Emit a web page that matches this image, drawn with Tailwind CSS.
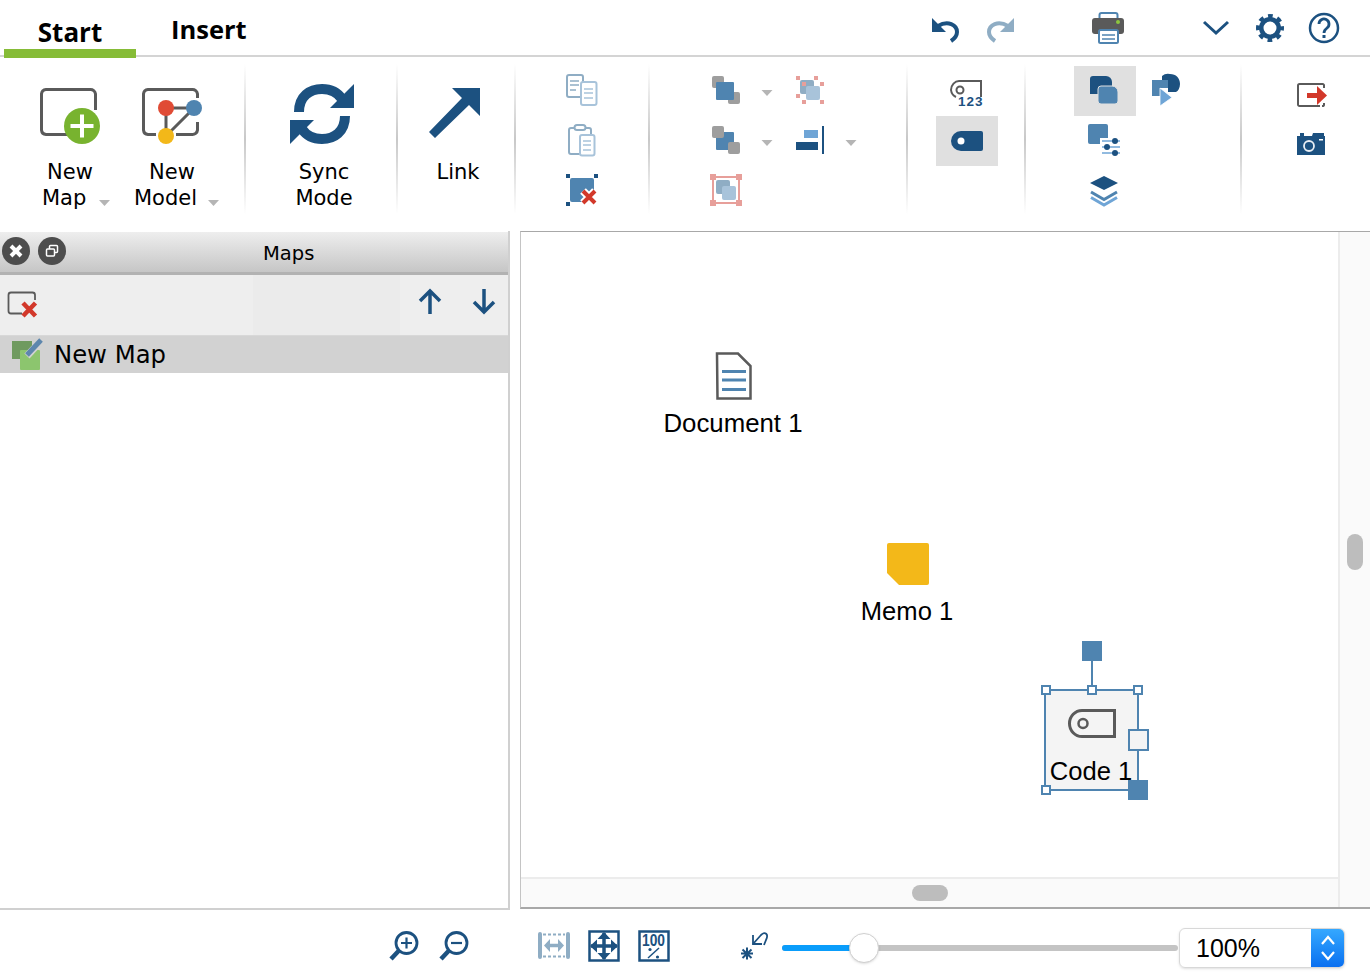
<!DOCTYPE html>
<html lang="en">
<head>
    <meta charset="UTF-8">
    <title>Maps</title>
    <script src="https://cdn.jsdelivr.net/npm/@tailwindcss/browser@4"></script>
</head>
<body class="bg-white w-[1370px] h-[977px] overflow-hidden font-['DejaVu_Sans',sans-serif] text-black">

    <!-- Tabs and quick access -->
    <header class="h-[57px] border-b-2 border-[#d4d4d4] flex items-start">
        <div class="ml-[4px] w-[132px] h-[58px] shrink-0 border-b-[9px] border-[#86bc37] pt-[14px] text-center font-['Open_Sans',sans-serif] font-bold text-[26px] leading-[36px]">Start</div>
        <div class="ml-[35px] w-[75px] shrink-0 whitespace-nowrap pt-[11px] font-['Open_Sans',sans-serif] font-bold text-[25.5px] leading-[36px]">Insert</div>
        <svg class="block ml-[685px] mt-[12px] shrink-0" width="30" height="32" viewBox="931 12 30 32">
            <path d="M932 18V32H946Z" fill="#1c5180"/>
            <path d="M938 26C948 20 957 25 957 32C957 36 954 39 951 41" fill="none" stroke="#1c5180" stroke-width="4"/>
        </svg>
        <svg class="block ml-[25px] mt-[12px] shrink-0" width="30" height="32" viewBox="986 12 30 32">
            <path d="M1014 18V32H1000Z" fill="#8fadc4"/>
            <path d="M1008 26C998 20 989 25 989 32C989 36 992 39 995 41" fill="none" stroke="#8fadc4" stroke-width="4"/>
        </svg>
        <svg class="block ml-[75px] mt-[11px] shrink-0" width="34" height="34" viewBox="1091 11 34 34">
            <rect x="1099.500" y="13" width="18" height="10" rx="2" fill="#fff" stroke="#4f84b0" stroke-width="2"/>
            <rect x="1092" y="18" width="32" height="16" rx="3" fill="#5a5a5a"/>
            <circle cx="1118" cy="22" r="2" fill="#8cc63f"/>
            <rect x="1099" y="30" width="19" height="13" rx="1.500" fill="#fff" stroke="#4f84b0" stroke-width="2"/>
            <path d="M1102 35H1115M1102 39H1115" stroke="#4f84b0" stroke-width="1.500"/>
        </svg>
        <svg class="block ml-[77px] mt-[18px] shrink-0" width="28" height="18" viewBox="1202 18 28 18">
            <path d="M1204 22L1216 33L1228 22" fill="none" stroke="#1c5180" stroke-width="3"/>
        </svg>
        <svg class="block ml-[25px] mt-[13px] shrink-0" width="30" height="30" viewBox="1255 13 30 30">
            <circle cx="1270" cy="28" r="8.750" fill="none" stroke="#1c5180" stroke-width="4.500"/>
            <circle cx="1270" cy="28" r="11.500" fill="none" stroke="#1c5180" stroke-width="5" stroke-dasharray="4.500 4.530" stroke-dashoffset="2.250"/>
        </svg>
        <svg class="block ml-[23px] mt-[12px] shrink-0" width="32" height="32" viewBox="1308 12 32 32">
            <circle cx="1324" cy="28" r="14" fill="none" stroke="#1c5180" stroke-width="2.500"/>
            <path d="M1319 24A5 5 0 1 1 1327 28C1325 29.500 1324 30.500 1324 33" fill="none" stroke="#1c5180" stroke-width="2.800"/>
            <rect x="1322.500" y="35" width="3" height="3" fill="#1c5180"/>
        </svg>
    </header>

    <!-- Ribbon -->
    <section class="h-[174px] flex text-[21px] leading-[26px]">
        <!-- New Map / New Model -->
        <div class="w-[244px] flex pl-[19px] shrink-0">
            <div class="w-[102px] pt-[23px]">
                <svg class="block mx-auto" width="66" height="68" viewBox="37 80 66 68">
                    <path d="M72 134.500H46A5 5 0 0 1 41.500 130V94A5 5 0 0 1 46 89.500H90A5 5 0 0 1 95.500 94V110" fill="none" stroke="#5a5a5a" stroke-width="3"/>
                    <circle cx="82" cy="126" r="18" fill="#78b32f"/>
                    <path d="M70.500 126H93.500M82 114.500V137.500" stroke="#fff" stroke-width="4"/>
                </svg>
                <div class="text-center mt-[11px]">New</div>
                <div class="flex items-center pl-[23px]">Map<svg class="block ml-[13px] mt-[10px]" width="11" height="6" viewBox="0 0 11 6"><path d="M0 0H11L5.500 6Z" fill="#b5b5b5"/></svg></div>
            </div>
            <div class="w-[102px] pt-[23px]">
                <svg class="block mx-auto" width="66" height="68" viewBox="139 80 66 68">
                    <path d="M156 134.500H148A5 5 0 0 1 143.500 130V94A5 5 0 0 1 148 89.500H192A5 5 0 0 1 197.500 94V98M197.500 122V130A5 5 0 0 1 192 134.500H176" fill="none" stroke="#5a5a5a" stroke-width="3"/>
                    <path d="M166 108H194L166 136Z" fill="none" stroke="#5a5a5a" stroke-width="3"/>
                    <circle cx="166" cy="108" r="8" fill="#e04b35"/>
                    <circle cx="194" cy="108" r="8" fill="#4f84b0"/>
                    <circle cx="166" cy="136" r="8" fill="#f3b819"/>
                </svg>
                <div class="text-center mt-[11px]">New</div>
                <div class="flex items-center pl-[13px]">Model<svg class="block ml-[11px] mt-[10px]" width="11" height="6" viewBox="0 0 11 6"><path d="M0 0H11L5.500 6Z" fill="#b5b5b5"/></svg></div>
            </div>
        </div>
        <div class="w-[2px] h-[150px] mt-[7px] shrink-0 bg-linear-to-b from-white via-[#c8c8c8] to-white"></div>

        <!-- Sync -->
        <div class="w-[150px] pt-[23px] shrink-0 text-center">
            <svg class="block mx-auto translate-x-[1px]" width="66" height="68" viewBox="289 80 66 68">
                <path d="M299 112C299 96 310 89 322 89C331 89 338 93 342 99" fill="none" stroke="#1c5180" stroke-width="10"/>
                <path d="M354 84V108H330Z" fill="#1c5180"/>
                <path d="M345 116C345 132 334 139 322 139C313 139 306 135 302 129" fill="none" stroke="#1c5180" stroke-width="10"/>
                <path d="M290 144V120H314Z" fill="#1c5180"/>
            </svg>
            <div class="pl-[6px] mt-[11px]">Sync<br>Mode</div>
        </div>
        <div class="w-[2px] h-[150px] mt-[7px] shrink-0 bg-linear-to-b from-white via-[#c8c8c8] to-white"></div>

        <!-- Link -->
        <div class="w-[116px] pt-[23px] shrink-0 text-center">
            <svg class="block mx-auto -translate-x-[1px]" width="54" height="68" viewBox="428 80 54 68">
                <path d="M452 88H480V116L469 105L435 138L429 132L462 98Z" fill="#1c5180"/>
            </svg>
            <div class="pl-[4px] mt-[11px]">Link</div>
        </div>
        <div class="w-[2px] h-[150px] mt-[7px] shrink-0 bg-linear-to-b from-white via-[#c8c8c8] to-white"></div>

        <!-- Clipboard -->
        <div class="w-[132px] shrink-0 pt-[9px] flex flex-col items-center">
            <svg class="block" width="50" height="50" viewBox="557 66 50 50">
                <rect x="567" y="75" width="16" height="22" rx="2" fill="#fff" stroke="#8fadc4" stroke-width="2"/>
                <path d="M570 81H579M570 85H579M570 90H576" stroke="#8fadc4" stroke-width="1.500"/>
                <rect x="581" y="82" width="15.500" height="23" rx="2" fill="#fff" stroke="#a8c3da" stroke-width="2"/>
                <path d="M584 89H593M584 93H593M584 98H593" stroke="#a8c3da" stroke-width="1.500"/>
            </svg>
            <svg class="block" width="50" height="50" viewBox="557 116 50 50">
                <path d="M574 128H571A2 2 0 0 0 569 130V152A2 2 0 0 0 571 154H580M586 128H589A2 2 0 0 1 591 130V135" fill="none" stroke="#8fadc4" stroke-width="2"/>
                <rect x="574.500" y="125" width="11" height="5" rx="2.500" fill="#fff" stroke="#8fadc4" stroke-width="2"/>
                <rect x="580" y="135" width="14.500" height="20.500" rx="2" fill="#fff" stroke="#a8c3da" stroke-width="2"/>
                <path d="M583 141H591M583 145H591M583 150H591" stroke="#a8c3da" stroke-width="1.500"/>
            </svg>
            <svg class="block" width="50" height="50" viewBox="557 166 50 50">
                <path d="M566 174H570V178H566ZM594 174H598V178H594ZM566 202H570V206H566Z" fill="#1c5180"/>
                <rect x="570" y="178" width="24" height="24" rx="2" fill="#4f84b0"/>
                <path d="M583 191L595 203M595 191L583 203" stroke="#fff" stroke-width="8"/>
                <path d="M583 191L595 203M595 191L583 203" stroke="#d2382a" stroke-width="4"/>
            </svg>
        </div>
        <div class="w-[2px] h-[150px] mt-[7px] shrink-0 bg-linear-to-b from-white via-[#c8c8c8] to-white"></div>

        <!-- Arrange -->
        <div class="w-[256px] shrink-0 pt-[9px] pl-[56px]">
            <div class="grid grid-cols-[40px_42px_44px_38px] grid-rows-[50px_50px_50px]">
                <svg class="block" width="40" height="50" viewBox="706 66 40 50">
                    <rect x="712" y="76" width="12" height="12" rx="2" fill="#9e9e9e"/>
                    <rect x="728" y="92" width="12" height="12" rx="2" fill="#9e9e9e"/>
                    <rect x="716" y="82" width="18" height="18" rx="1" fill="#4f84b0"/>
                </svg>
                <svg class="block" width="42" height="50" viewBox="746 66 42 50"><path d="M761.500 90H772.500L767 96Z" fill="#b5b5b5"/></svg>
                <svg class="block" width="44" height="50" viewBox="788 66 44 50">
                    <rect x="800" y="80" width="14" height="14" rx="2" fill="#8fadc4"/>
                    <rect x="806" y="86" width="14" height="14" rx="2" fill="#a8c3da"/>
                    <path d="M796 76h4v4h-4ZM814 76h4v4h-4ZM802 82h4v4h-4ZM820 82h4v4h-4ZM796 94h4v4h-4ZM802 100h4v4h-4ZM820 100h4v4h-4Z" fill="#e79f9a"/>
                </svg>
                <div></div>
                <svg class="block" width="40" height="50" viewBox="706 116 40 50">
                    <rect x="716" y="132" width="18" height="18" rx="1" fill="#4f84b0"/>
                    <rect x="712" y="126" width="12" height="12" rx="2" fill="#9e9e9e"/>
                    <rect x="728" y="142" width="12" height="12" rx="2" fill="#9e9e9e"/>
                </svg>
                <svg class="block" width="42" height="50" viewBox="746 116 42 50"><path d="M761.500 140H772.500L767 146Z" fill="#b5b5b5"/></svg>
                <svg class="block" width="44" height="50" viewBox="788 116 44 50">
                    <rect x="804" y="130" width="14" height="8" fill="#6fa5d6"/>
                    <rect x="796" y="142" width="22" height="8" fill="#1c5180"/>
                    <rect x="822" y="126" width="2" height="28" fill="#1c5180"/>
                </svg>
                <svg class="block" width="38" height="50" viewBox="832 116 38 50"><path d="M845.500 140H856.500L851 146Z" fill="#b5b5b5"/></svg>
                <svg class="block" width="40" height="50" viewBox="706 166 40 50">
                    <rect x="713" y="177" width="26" height="26" fill="none" stroke="#e79f9a" stroke-width="2"/>
                    <path d="M710 174h6v6h-6ZM736 174h6v6h-6ZM710 200h6v6h-6ZM736 200h6v6h-6Z" fill="#e79f9a"/>
                    <rect x="716" y="180" width="14" height="14" rx="2" fill="#8fadc4"/>
                    <rect x="722" y="186" width="14" height="14" rx="2" fill="#a8c3da"/>
                </svg>
            </div>
        </div>
        <div class="w-[2px] h-[150px] mt-[7px] shrink-0 bg-linear-to-b from-white via-[#c8c8c8] to-white"></div>

        <!-- Tags -->
        <div class="w-[116px] shrink-0 pt-[9px] pl-[2px] flex flex-col items-center">
            <svg class="block" width="62" height="50" viewBox="936 66 62 50">
                <path d="M956 97A9 9 0 0 1 951 90C951 85 955 81 959 81H981V97" fill="none" stroke="#5a5a5a" stroke-width="2"/>
                <circle cx="960" cy="90" r="3.500" fill="none" stroke="#5a5a5a" stroke-width="2"/>
                <text x="958" y="106" font-family="Liberation Sans" font-weight="700" font-size="13.500" letter-spacing="1" fill="#1c5180">123</text>
            </svg>
            <div class="w-[62px] h-[50px] bg-[#e0e0e0] flex items-center justify-center">
                <svg class="block" width="32" height="20" viewBox="0 0 32 20">
                    <path d="M10 0H30A2 2 0 0 1 32 2V18A2 2 0 0 1 30 20H10A10 10 0 0 1 10 0Z" fill="#1c5180"/>
                    <circle cx="10" cy="10" r="3.500" fill="#fff"/>
                </svg>
            </div>
        </div>
        <div class="w-[2px] h-[150px] mt-[7px] shrink-0 bg-linear-to-b from-white via-[#c8c8c8] to-white"></div>

        <!-- View -->
        <div class="w-[214px] shrink-0 pt-[9px] pl-[48px]">
            <div class="grid grid-cols-[62px_60px] grid-rows-[50px_50px_50px]">
                <div class="bg-[#e0e0e0]">
                    <svg class="block" width="62" height="50" viewBox="1074 66 62 50">
                        <path d="M1090 79A3 3 0 0 1 1093 76H1106A6 6 0 0 1 1112 82V94H1090Z" fill="#1c5180"/>
                        <path d="M1098 89A3 3 0 0 1 1101 86H1112A6 6 0 0 1 1118 92V101A3 3 0 0 1 1115 104H1101A3 3 0 0 1 1098 101Z" fill="#4f84b0" stroke="#e0e0e0" stroke-width="1"/>
                    </svg>
                </div>
                <svg class="block" width="60" height="50" viewBox="1136 66 60 50">
                    <path d="M1162 76A9 9 0 0 1 1170 74C1176 74 1180 78 1180 84C1180 88 1178 91 1176 92H1168V80H1162Z" fill="#1c5180"/>
                    <path d="M1152 80H1168V88H1160V96H1152Z" fill="#4f84b0"/>
                    <path d="M1160 88L1172 97.500L1160 106Z" fill="#6fa5d6" stroke="#fff" stroke-width="0.800"/>
                </svg>
                <svg class="block" width="62" height="50" viewBox="1074 116 62 50">
                    <rect x="1088" y="124" width="20" height="20" rx="2" fill="#4f84b0"/>
                    <rect x="1100" y="138" width="22" height="18" fill="#fff"/>
                    <path d="M1102 141H1120M1102 147H1120M1102 153H1120" stroke="#6fa5d6" stroke-width="1.500"/>
                    <circle cx="1115" cy="141" r="3" fill="#1c5180"/>
                    <circle cx="1107" cy="147" r="3" fill="#1c5180"/>
                    <circle cx="1115" cy="153" r="3" fill="#1c5180"/>
                </svg>
                <div></div>
                <svg class="block" width="62" height="50" viewBox="1074 166 62 50">
                    <path d="M1091 197.500L1104 205L1117 197.500" fill="none" stroke="#6fa5d6" stroke-width="3"/>
                    <path d="M1091 192L1104 199.500L1117 192" fill="none" stroke="#4f84b0" stroke-width="3"/>
                    <path d="M1104 176L1118 183L1104 190L1090 183Z" fill="#1c5180"/>
                </svg>
            </div>
        </div>
        <div class="w-[2px] h-[150px] mt-[7px] shrink-0 bg-linear-to-b from-white via-[#c8c8c8] to-white"></div>

        <!-- Export -->
        <div class="flex-1 pt-[9px] pl-[44px]">
            <svg class="block" width="50" height="50" viewBox="1286 66 50 50">
                <path d="M1324 88V85A1.500 1.500 0 0 0 1322 84H1299.500A1.500 1.500 0 0 0 1298 85.500V104.500A1.500 1.500 0 0 0 1299.500 106H1320M1322 106H1323.500A1 1 0 0 0 1324 105V103" fill="none" stroke="#5a5a5a" stroke-width="2"/>
                <rect x="1307" y="93" width="11" height="5" fill="#d2382a"/>
                <path d="M1317 86L1327 95.500L1317 105Z" fill="#d2382a"/>
            </svg>
            <svg class="block" width="50" height="50" viewBox="1286 116 50 50">
                <path d="M1297 136H1300V133H1304V136H1312L1313 133H1324V136H1325V155H1297Z" fill="#1c5180"/>
                <circle cx="1309" cy="146" r="5" fill="none" stroke="#e8eef4" stroke-width="1.800"/>
                <rect x="1319" y="139" width="4" height="1.500" fill="#fff"/>
            </svg>
        </div>
    </section>

    <!-- Main -->
    <main class="flex items-start h-[679px]">
        <!-- Maps panel -->
        <aside class="w-[510px] h-[679px] shrink-0 border-r-2 border-b-2 border-[#d0d0d0]">
            <div class="h-[43px] mt-[1px] flex items-center bg-linear-to-b from-[#eeeeee] to-[#c6c6c6] border-b-[3px] border-[#b2b2b2]">
                <div class="ml-[2px] -mt-[2px] w-[28px] h-[28px] rounded-full bg-[#4d4d4d] flex items-center justify-center">
                    <svg width="16" height="16" viewBox="0 0 16 16"><path d="M3 3L13 13M13 3L3 13" stroke="#fff" stroke-width="4"/></svg>
                </div>
                <div class="ml-[8px] -mt-[2px] w-[28px] h-[28px] rounded-full bg-[#4d4d4d] flex items-center justify-center">
                    <svg width="16" height="16" viewBox="0 0 16 16"><rect x="5.500" y="2.500" width="8" height="7" rx="1" fill="none" stroke="#fff" stroke-width="1.500"/><rect x="2.500" y="6" width="8" height="7" rx="1" fill="#4d4d4d" stroke="#fff" stroke-width="1.500"/></svg>
                </div>
                <div class="ml-[197px] mt-[3px] text-[19.5px] leading-[26px]">Maps</div>
            </div>
            <div class="h-[61px] flex bg-[#eeeeee] border-b border-[#d8d8d8]">
                <div class="w-[253px] shrink-0 pl-[7px] pt-[15px]">
                    <svg class="block" width="32" height="30" viewBox="7 289 32 30">
                        <path d="M22 312.500H11A2.500 2.500 0 0 1 8.500 310V294A2.500 2.500 0 0 1 11 291.500H32.500A2.500 2.500 0 0 1 35 294V299" fill="none" stroke="#5a5a5a" stroke-width="1.800"/>
                        <path d="M23 302L35.500 315M35.500 302L23 315" stroke="#d2382a" stroke-width="4.500"/>
                    </svg>
                </div>
                <div class="w-[147px] bg-[#ebebeb] shrink-0"></div>
                <svg class="block ml-[17px] mt-[12px]" width="26" height="28" viewBox="417 288 26 28">
                    <path d="M430 315V292M420 302L430 292L440 302" fill="none" stroke="#1c5180" stroke-width="3.500"/>
                </svg>
                <svg class="block ml-[28px] mt-[12px]" width="26" height="28" viewBox="471 288 26 28">
                    <path d="M484 290V313M474 303L484 313L494 303" fill="none" stroke="#1c5180" stroke-width="3.500"/>
                </svg>
            </div>
            <div class="h-[37px] flex items-center bg-[#d2d2d2] text-[24.3px]">
                <svg class="block ml-[11px]" width="32" height="33" viewBox="11 337 32 33">
                    <rect x="12" y="340" width="20" height="18" fill="#6f9a5f"/>
                    <rect x="20" y="349" width="20" height="20" rx="1" fill="#8cc56e"/>
                    <path d="M41 340L27 355" stroke="#d2d2d2" stroke-width="7"/>
                    <path d="M41 339L27 354" stroke="#5d86ad" stroke-width="5"/>
                </svg>
                <span class="ml-[11px] mt-[1px]">New Map</span>
            </div>
        </aside>

        <!-- Canvas -->
        <div class="ml-[10px] flex-1 h-[678px] flex border-t border-l border-b-2 border-t-[#a8a8a8] border-l-[#c4c4c4] border-b-[#a8a8a8] font-['Liberation_Sans',sans-serif] text-[25.6px] leading-[30px]">
            <div class="flex-1 flex flex-col min-w-0">
                <div class="flex-1 relative">
                    <!-- Document 1 -->
                    <div class="absolute left-[133px] top-[120px] w-[160px] flex flex-col items-center">
                        <svg class="block" width="38" height="48" viewBox="715 352 38 48">
                            <path d="M717 353.500H738L750.500 366V398.500H717.500Z" fill="#fff" stroke="#5a5a5a" stroke-width="2.500"/>
                            <path d="M722 371.500H746M722 380H746M722 389.500H746" stroke="#4f84b0" stroke-width="3"/>
                        </svg>
                        <div class="mt-[8px] -ml-[2px] whitespace-nowrap text-[25.8px]">Document 1</div>
                    </div>
                    <!-- Memo 1 -->
                    <div class="absolute left-[307px] top-[311px] w-[160px] flex flex-col items-center">
                        <svg class="block" width="42" height="42" viewBox="0 0 42 42">
                            <path d="M2 0H40A2 2 0 0 1 42 2V40A2 2 0 0 1 40 42H12L0 30V2A2 2 0 0 1 2 0Z" fill="#f3b819"/>
                        </svg>
                        <div class="mt-[11px] -ml-[2px] whitespace-nowrap">Memo 1</div>
                    </div>
                    <!-- Code 1, selected -->
                    <div class="absolute left-[523px] top-[457px] w-[95px] h-[102px] border-2 border-[#4f84b0] bg-[#f4f4f4] flex flex-col items-center">
                        <svg class="block mt-[18px]" width="48" height="29" viewBox="1068 709 48 29">
                            <path d="M1082 710.500H1114.500V736.500H1082A12.500 13 0 0 1 1082 710.500Z" fill="none" stroke="#5a5a5a" stroke-width="3"/>
                            <circle cx="1083" cy="723.500" r="4.500" fill="none" stroke="#5a5a5a" stroke-width="2.500"/>
                        </svg>
                        <div class="mt-[18px] -ml-[1px] whitespace-nowrap">Code 1</div>
                        <div class="absolute left-[45px] top-[-30px] w-[2px] h-[30px] bg-[#4f84b0]"></div>
                        <div class="absolute left-[36px] top-[-50px] w-[20px] h-[20px] bg-[#4f84b0]"></div>
                        <div class="absolute left-[-5px] top-[-6px] w-[10px] h-[10px] bg-white border-2 border-[#4f84b0]"></div>
                        <div class="absolute left-[41px] top-[-6px] w-[10px] h-[10px] bg-white border-2 border-[#4f84b0]"></div>
                        <div class="absolute left-[87px] top-[-6px] w-[10px] h-[10px] bg-white border-2 border-[#4f84b0]"></div>
                        <div class="absolute left-[-5px] top-[94px] w-[10px] h-[10px] bg-white border-2 border-[#4f84b0]"></div>
                        <div class="absolute left-[82px] top-[38px] w-[21px] h-[22px] bg-[#f4f4f4] border-2 border-[#4f84b0]"></div>
                        <div class="absolute left-[82px] top-[89px] w-[20px] h-[20px] bg-[#4f84b0]"></div>
                    </div>
                </div>
                <div class="h-[30px] bg-[#fafafa] border-t-2 border-[#ececec] pl-[391px] pt-[6px]">
                    <div class="w-[36px] h-[16px] rounded-full bg-[#bdbdbd]"></div>
                </div>
            </div>
            <div class="w-[32px] shrink-0 bg-[#fafafa] border-l-2 border-[#ececec] pl-[7px] pt-[302px]">
                <div class="w-[16px] h-[36px] rounded-full bg-[#bdbdbd]"></div>
            </div>
        </div>
    </main>

    <!-- Zoom bar -->
    <footer class="h-[67px] flex items-start pt-[15px] pl-[385px]">
        <svg class="block shrink-0" width="40" height="44" viewBox="385 925 40 44">
            <circle cx="406.500" cy="943" r="10.500" fill="none" stroke="#1c5180" stroke-width="2.800"/>
            <path d="M399.500 950L391 959" stroke="#1c5180" stroke-width="4.500"/>
            <path d="M401 943H412M406.500 937.500V948.500" stroke="#1c5180" stroke-width="2.200"/>
        </svg>
        <svg class="block shrink-0 ml-[10px]" width="40" height="44" viewBox="435 925 40 44">
            <circle cx="456.500" cy="943" r="10.500" fill="none" stroke="#1c5180" stroke-width="2.800"/>
            <path d="M449.500 950L441 959" stroke="#1c5180" stroke-width="4.500"/>
            <path d="M451 943H462" stroke="#1c5180" stroke-width="2.200"/>
        </svg>
        <svg class="block shrink-0 ml-[59px]" width="40" height="44" viewBox="534 925 40 44">
            <path d="M540 934V957M568 934V957" stroke="#8fadc4" stroke-width="4" stroke-linecap="round"/>
            <path d="M543 934.500H565M543 956.500H565" stroke="#8fadc4" stroke-width="2" stroke-dasharray="3 2"/>
            <path d="M547 945.500H561" stroke="#8fadc4" stroke-width="3.500"/>
            <path d="M550 939L544 945.500L550 952ZM558 939L564 945.500L558 952Z" fill="#8fadc4"/>
        </svg>
        <svg class="block shrink-0 ml-[10px]" width="40" height="44" viewBox="584 925 40 44">
            <rect x="589.500" y="931.500" width="29" height="29" fill="none" stroke="#1c5180" stroke-width="2.500"/>
            <path d="M591 946H617M604 933V959" stroke="#1c5180" stroke-width="3.500"/>
            <path d="M597 939.500L590 946L597 952.500ZM611 939.500L618 946L611 952.500ZM597.500 939L604 932L610.500 939ZM597.500 953L604 960L610.500 953Z" fill="#1c5180"/>
        </svg>
        <svg class="block shrink-0 ml-[10px]" width="40" height="44" viewBox="634 925 40 44">
            <rect x="639.500" y="931.500" width="29" height="29" fill="none" stroke="#1c5180" stroke-width="2.500"/>
            <text x="642" y="946" font-family="Liberation Sans" font-size="16" font-weight="700" textLength="23" lengthAdjust="spacingAndGlyphs" fill="#1c5180">100</text>
            <path d="M648 958L659 948" stroke="#1c5180" stroke-width="1.500"/>
            <circle cx="650" cy="949.500" r="1.600" fill="#1c5180"/>
            <circle cx="657.500" cy="957" r="1.600" fill="#1c5180"/>
        </svg>
        <svg class="block shrink-0 ml-[62px]" width="36" height="44" viewBox="736 925 36 44">
            <path d="M741 953.500H753M747 947.500V959.500M742.500 949.500L751.500 958M751.500 949.500L742.500 958" stroke="#1c5180" stroke-width="2"/>
            <path d="M753 935V944H762" fill="none" stroke="#1c5180" stroke-width="1.800"/>
            <path d="M753 944L761 935C765 931 769 934 766 940L764 945" fill="none" stroke="#1c5180" stroke-width="1.800"/>
        </svg>
        <div class="relative ml-[10px] mt-[20px] w-[396px] h-[6px] shrink-0 rounded-full bg-[#c4c4c4]">
            <div class="w-[72px] h-[6px] rounded-l-full bg-[#0a9dfb]"></div>
            <div class="absolute left-[67px] top-[-12px] w-[30px] h-[30px] rounded-full bg-white border border-[#d0d0d0] shadow-sm"></div>
        </div>
        <div class="ml-[1px] mt-[3px] w-[166px] h-[40px] shrink-0 flex rounded-[6px] border border-[#d8d8d8] shadow-sm overflow-hidden font-['Liberation_Sans',sans-serif] text-[25px]">
            <div class="flex-1 pl-[16px] leading-[38px]">100%</div>
            <div class="w-[33px] bg-linear-to-b from-[#35a8ff] to-[#0a6ff0] flex items-center justify-center">
                <svg width="16" height="30" viewBox="0 0 16 30">
                    <path d="M2 11L8 4L14 11M2 19L8 26L14 19" fill="none" stroke="#fff" stroke-width="2.200"/>
                </svg>
            </div>
        </div>
    </footer>
</body>
</html>
